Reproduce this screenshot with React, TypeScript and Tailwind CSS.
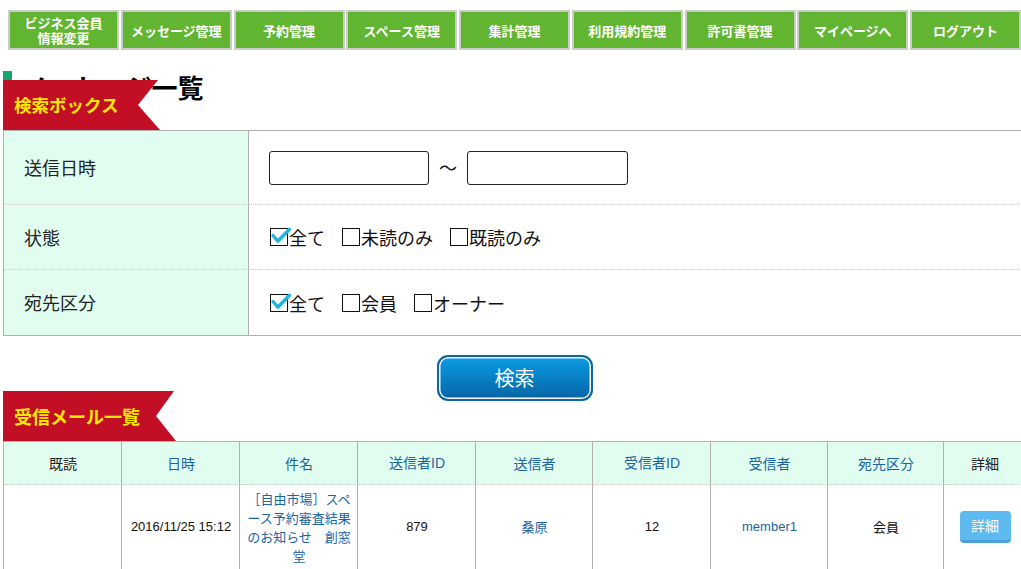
import React from "react";

const JP = "font-['Noto_Sans_CJK_JP',sans-serif]";
const NUM = "font-['Liberation_Sans','Noto_Sans_CJK_JP',sans-serif]";

const navItems: React.ReactNode[] = [
  <>ビジネス会員<br />情報変更</>,
  "メッセージ管理",
  "予約管理",
  "スペース管理",
  "集計管理",
  "利用規約管理",
  "許可書管理",
  "マイページへ",
  "ログアウト",
];

function Check({ checked }: { checked?: boolean }) {
  return (
    <svg width="19" height="20" viewBox="0 0 19 20" className="shrink-0 overflow-visible">
      <rect x="0.5" y="1.5" width="17" height="17" fill="white" stroke="#111" />
      {checked && (
        <path
          d="M3 8.5 L7.8 14.2 L19.5 2.2"
          fill="none"
          stroke="#22b4dc"
          strokeWidth="3.4"
          strokeLinecap="round"
          strokeLinejoin="round"
        />
      )}
    </svg>
  );
}

function Opt({ label, checked }: { label: string; checked?: boolean }) {
  return (
    <label className="flex items-center mr-[17px]">
      <Check checked={checked} />
      <span className="text-[18px] leading-[20px] text-[#111]">{label}</span>
    </label>
  );
}

function Ribbon({ w, tip }: { w: number; tip: number }) {
  return (
    <svg width={w} height="50" className="block" style={{ overflow: "visible" }}>
      <polygon points={`0,0 ${w - 2},0 ${tip},25 ${w},50 0,50`} fill="#c20f26" />
    </svg>
  );
}

const VLINE = "shadow-[inset_-1px_0_0_#b0b0b0]";
const HDOT = "border-b border-dotted border-[#c8c8c8]";

export default function App() {
  const headCells = [
    { t: "既読", blue: false },
    { t: "日時", blue: true },
    { t: "件名", blue: true },
    { t: "送信者ID", blue: true },
    { t: "送信者", blue: true },
    { t: "受信者ID", blue: true },
    { t: "受信者", blue: true },
    { t: "宛先区分", blue: true },
    { t: "詳細", blue: false },
  ];
  const bodyCell = `h-[85px] ${VLINE} ${HDOT} flex items-center justify-center text-[13px]`;
  return (
    <div className={`w-full h-[569px] overflow-hidden bg-white ${JP}`}>
      {/* nav */}
      <div className="flex gap-[1.75px] pl-[8px] pt-[10px] w-[1040px]">
        {navItems.map((n, i) => (
          <div
            key={i}
            className="w-[111px] h-[40px] shrink-0 bg-[#62b531] border-2 border-[#c9cfc6] flex items-center justify-center text-white font-bold text-[13px] leading-[15px] text-center"
          >
            <span>{n}</span>
          </div>
        ))}
      </div>

      <div className="ml-[3px] w-[1023px]">
        {/* heading + ribbon */}
        <div className="relative h-[59px] mt-[21px]">
          <div className="flex items-start">
            <div className="w-[9px] h-[9px] bg-[#14a870] shrink-0" />
            <div className="ml-[10px] mt-[1px] text-[26px] leading-[30px] font-bold text-black">
              メッセージ一覧
            </div>
          </div>
          <div className="absolute left-0 top-[9px] w-[160px] h-[50px]">
            <Ribbon w={157} tip={135} />
            <div className="absolute inset-0 flex items-center pl-[11px] text-[17.5px] font-bold text-[#ffe800] leading-none">
              検索ボックス
            </div>
          </div>
        </div>

        {/* search box */}
        <div className="grid grid-cols-[245px_1fr] border-t border-b border-l border-[#b0b0b0]">
          <div className={`h-[74px] bg-[#e1fdf0] ${VLINE} ${HDOT} flex items-center pl-[20px] text-[18px] text-[#222]`}>
            送信日時
          </div>
          <div className={`h-[74px] ${HDOT} flex items-center pl-[20px]`}>
            <div className="w-[160px] h-[34px] border border-[#222] rounded-[3px]" />
            <span className="mx-[10px] text-[18px] text-[#111]">～</span>
            <div className="w-[161px] h-[34px] border border-[#222] rounded-[3px]" />
          </div>

          <div className={`h-[65px] bg-[#e1fdf0] ${VLINE} ${HDOT} flex items-center pl-[20px] text-[18px] text-[#222]`}>
            状態
          </div>
          <div className={`h-[65px] ${HDOT} flex items-center pl-[21px]`}>
            <Opt label="全て" checked />
            <Opt label="未読のみ" />
            <Opt label="既読のみ" />
          </div>

          <div className={`h-[65px] bg-[#e1fdf0] ${VLINE} flex items-center pl-[20px] text-[18px] text-[#222]`}>
            宛先区分
          </div>
          <div className="h-[65px] flex items-center pl-[21px]">
            <Opt label="全て" checked />
            <Opt label="会員" />
            <Opt label="オーナー" />
          </div>
        </div>

        {/* search button */}
        <div className="flex justify-center mt-[19px]">
          <button className="w-[156px] h-[46px] rounded-[11px] border-2 border-[#0b68a6] bg-gradient-to-b from-[#0a9ce6] to-[#0865a5] shadow-[inset_0_0_0_1.5px_#ffffff] text-white text-[20px] leading-none flex items-center justify-center">
            検索
          </button>
        </div>

        {/* ribbon 2 */}
        <div className="relative w-[176px] h-[50px] -mt-[10px]">
          <Ribbon w={173} tip={153} />
          <div className="absolute inset-0 flex items-center pl-[11px] text-[18px] font-bold text-[#ffe800] leading-none">
            受信メール一覧
          </div>
        </div>

        {/* result table */}
        <div className="grid grid-cols-[118px_118px_118px_118px_117px_118px_117px_116px_1fr] border-t border-l border-[#b0b0b0]">
          {headCells.map((h, i) => (
            <div
              key={i}
              className={`h-[43px] bg-[#e1fdf0] ${VLINE} ${HDOT} flex items-center justify-center text-[14px] ${h.blue ? "text-[#1a64a0]" : "text-[#222]"}`}
            >
              <span className={h.t.includes("ID") ? NUM : ""}>{h.t}</span>
            </div>
          ))}

          <div className={bodyCell} />
          <div className={`${bodyCell} text-[#111] ${NUM}`}>2016/11/25 15:12</div>
          <div className={`${bodyCell} leading-[19px] text-[#1a64a0] text-center`}>
            <span>
              ［自由市場］スペ<br />ース予約審査結果<br />のお知らせ　創窓<br />堂
            </span>
          </div>
          <div className={`${bodyCell} text-[#111] ${NUM}`}>879</div>
          <div className={`${bodyCell} text-[#1a64a0]`}>桑原</div>
          <div className={`${bodyCell} text-[#111] ${NUM}`}>12</div>
          <div className={`${bodyCell} text-[#1a64a0] ${NUM}`}>member1</div>
          <div className={`${bodyCell} text-[#111]`}>会員</div>
          <div className={bodyCell}>
            <div className="w-[51px] h-[32px] rounded-[4px] bg-[#5cbaf1] border-b-[3px] border-[#4aa0d8] flex items-center justify-center text-white text-[14px]">
              詳細
            </div>
          </div>
        </div>
      </div>
    </div>
  );
}
